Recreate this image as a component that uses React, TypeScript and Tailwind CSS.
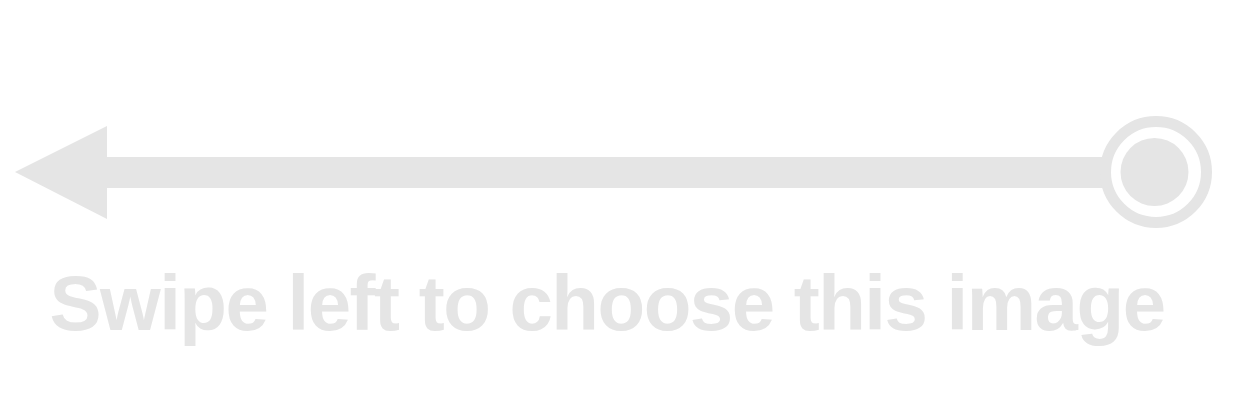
export default function App() {
  const tint = "#e5e5e5";

  return (
    <div className="w-[1250px] h-[400px] bg-white overflow-hidden flex flex-col">
      {/* swipe arrow */}
      <svg width="1250" height="240" viewBox="0 0 1250 240" className="block shrink-0">
        <polygon points="15,172 107,126 107,219" fill={tint} />
        <rect x="106" y="157" width="1000" height="31" fill={tint} />
        <circle cx="1156" cy="172" r="50.5" fill="#ffffff" stroke={tint} strokeWidth="11" />
        <circle cx="1154.5" cy="172" r="34" fill={tint} />
      </svg>

      {/* caption */}
      <div className="w-[1214px] mt-[24px] text-center">
        <p
          className="text-[78px] leading-none font-bold tracking-[-1.5px] text-[#e5e5e5] whitespace-nowrap"
          style={{ fontFamily: '"Liberation Sans", Arial, Helvetica, sans-serif' }}
        >
          Swipe left to choose this image
        </p>
      </div>
    </div>
  );
}
